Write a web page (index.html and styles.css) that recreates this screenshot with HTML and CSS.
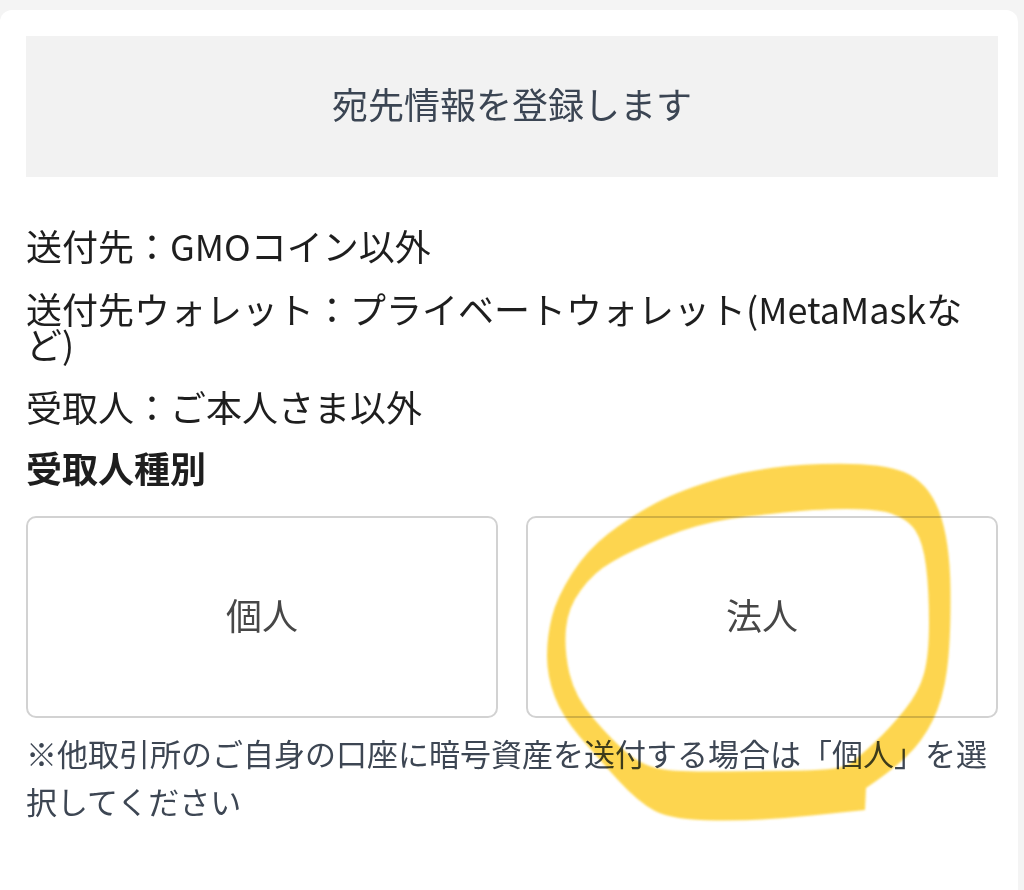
FILE: index.html
```html
<!DOCTYPE html>
<html lang="ja">
<head>
<meta charset="utf-8">
<title>宛先情報を登録します</title>
<link rel="stylesheet" href="styles.css">
</head>
<body>
<main class="card">
  <header class="banner">宛先情報を登録します</header>
  <section class="summary">
    <p class="line">送付先：GMOコイン以外</p>
    <p class="line">送付先ウォレット：プライベートウォレット(MetaMaskなど)</p>
    <p class="line">受取人：ご本人さま以外</p>
  </section>
  <h2 class="label">受取人種別</h2>
  <div class="choices">
    <button class="choice" type="button">個人</button>
    <button class="choice" type="button">法人</button>
  </div>
  <p class="note">※他取引所のご自身の口座に暗号資産を送付する場合は「個人」を選択してください</p>
</main>
<svg class="marker" width="1024" height="890" viewBox="0 0 1024 890" aria-hidden="true">
  <defs>
    <filter id="soft" x="-10%" y="-10%" width="120%" height="120%">
      <feGaussianBlur stdDeviation="1.3"/>
    </filter>
  </defs>
  <path filter="url(#soft)" fill="#fdd13a" fill-rule="evenodd"
    d="M821,464 Q880,462 904,472 Q928,482 939,511 Q950,540 950.5,590 Q951,640 947,670 Q943,700 932.5,721 Q922,742 906,757 Q890,772 866,788 L865,810 L812,815.5 Q760,821 716,820.5 Q672,820 655,811 Q638,802 617.5,779.5 Q597,757 579.5,736.5 Q562,716 554.5,696 Q547,676 547,656 Q547,636 552,616.5 Q557,597 572,573.5 Q587,550 608.5,533.5 Q630,517 655,503.5 Q680,490 721.5,478 Q763,466 821,464 Z
       M813,510 Q863,507 886,512 Q907,518 915,530 Q923,542 926,566 Q929,590 929,622.5 Q929,655 924,673.5 Q919,692 904.5,710 Q890,728 875,742 Q860,756 851,763 Q842,770 801,770.5 Q760,771 716,771.5 Q672,772 656,768 Q640,764 626,752 Q612,740 593.5,718.5 Q575,697 569.5,673.5 Q564,650 566,628.5 Q568,607 581,590 Q594,572 612,562 Q632,550 665,537 Q697,524 730,519 Q763,514 813,510 Z"/>
</svg>
</body>
</html>
```

FILE: styles.css
```css
html, body {
  margin: 0;
  padding: 0;
}

body {
  background: #f4f4f4;
  font-family: "Noto Sans CJK JP", "Noto Sans", sans-serif;
  color: #1e1e1e;
  position: relative;
  min-height: 890px;
  overflow: hidden;
}

.card {
  background: #ffffff;
  margin: 10px 6px 0 0;
  border-radius: 12px 12px 0 0;
  padding: 26px 20px 60px 26px;
  min-height: 800px;
}

.banner {
  background: #f2f2f2;
  height: 141px;
  box-sizing: border-box;
  padding-bottom: 7px;
  display: flex;
  align-items: center;
  justify-content: center;
  font-size: 36px;
  color: #3b4553;
}

.summary {
  display: flex;
  flex-direction: column;
  gap: 28px;
  margin-top: 51px;
}

.line {
  margin: 0;
  font-size: 36px;
  line-height: 35px;
}

.label {
  margin: 26px 0 0;
  font-size: 36px;
  line-height: 35px;
  font-weight: 700;
}

.choices {
  display: grid;
  grid-template-columns: 1fr 1fr;
  gap: 28px;
  margin-top: 31px;
}

.choice {
  height: 202px;
  background: #ffffff;
  border: 2px solid #d2d2d2;
  border-radius: 10px;
  font-family: inherit;
  font-size: 36px;
  color: #474747;
  padding: 0 0 6px;
}

.note {
  margin: 11px 0 0;
  font-size: 31px;
  line-height: 48px;
  color: #3d4653;
}

.marker {
  position: absolute;
  left: 0;
  top: 0;
  pointer-events: none;
  mix-blend-mode: multiply;
  opacity: 0.9;
}
```
